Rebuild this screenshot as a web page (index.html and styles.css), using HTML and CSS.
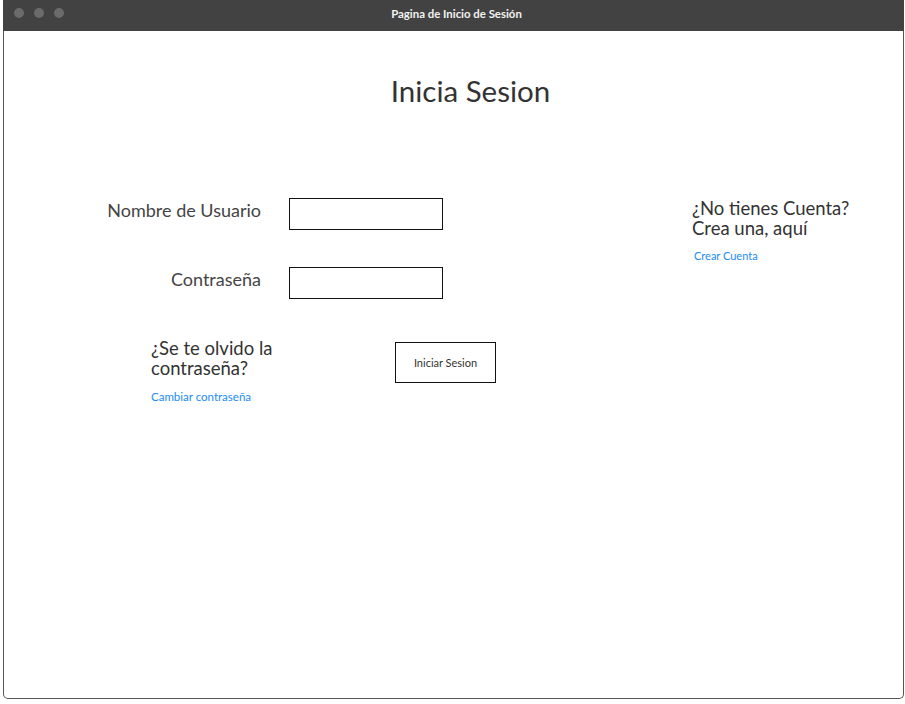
FILE: index.html
```html
<!DOCTYPE html>
<html lang="es">
<head>
<meta charset="utf-8">
<title>Pagina de Inicio de Sesión</title>
<link rel="stylesheet" href="styles.css">
</head>
<body>
<div class="window">
  <div class="titlebar">
    <div class="dots"><span class="dot"></span><span class="dot"></span><span class="dot"></span></div>
    <div class="title">Pagina de Inicio de Sesión</div>
  </div>
  <div class="content">
    <h1 class="heading">Inicia Sesion</h1>
    <div class="main">
      <div class="left">
        <div class="field">
          <label class="label">Nombre de Usuario</label>
          <div class="input"></div>
        </div>
        <div class="field field-2">
          <label class="label">Contraseña</label>
          <div class="input"></div>
        </div>
        <div class="bottom">
          <div class="forgot">
            <p class="question">¿Se te olvido la<br>contraseña?</p>
            <a class="link">Cambiar contraseña</a>
          </div>
          <div class="button">Iniciar Sesion</div>
        </div>
      </div>
      <div class="right">
        <p class="question">¿No tienes Cuenta?<br>Crea una, aquí</p>
        <a class="link link-right">Crear Cuenta</a>
      </div>
    </div>
  </div>
</div>
</body>
</html>
```

FILE: styles.css
```css
* { box-sizing: border-box; }
html, body { margin: 0; padding: 0; background: #fff; }
body { font-family: Lato, "Open Sans", sans-serif; color: #333; }

.window {
  margin-left: 3px;
  width: 901px;
  height: 699px;
  border: 1px solid #555;
  border-top: none;
  border-radius: 0 0 5px 5px;
  display: flex;
  flex-direction: column;
}
.titlebar {
  height: 31px;
  margin: 0 -1px;
  background: #424242;
  position: relative;
  display: flex;
  align-items: center;
  justify-content: center;
}
.dots {
  position: absolute;
  left: 11px;
  top: 8px;
  display: flex;
  gap: 10px;
}
.dot {
  width: 10px;
  height: 10px;
  border-radius: 50%;
  background: #6b6b6b;
}
.title {
  color: #f2f2f2;
  font-size: 11.4px;
  font-weight: bold;
  padding-left: 6px;
  padding-bottom: 4px;
}
.content { flex: 1; }
.heading {
  margin: 42px 0 0 34px;
  font-size: 29.5px;
  font-weight: normal;
  text-align: center;
  line-height: 36px;
  color: #333;
}
.main {
  display: flex;
  margin-top: 89px;
}
.left { width: 492px; }
.field {
  display: flex;
  align-items: center;
}
.field-2 { margin-top: 37px; }
.label {
  width: 257px;
  text-align: right;
  font-size: 18px;
  color: #444;
  margin-right: 28px;
  padding-bottom: 8px;
}
.input {
  width: 154px;
  height: 32px;
  border: 1px solid #111;
}
.bottom {
  display: flex;
  align-items: flex-start;
  margin-top: 39px;
  padding-left: 147px;
}
.forgot { width: 244px; }
.question {
  margin: 0;
  font-size: 18.5px;
  line-height: 20px;
  color: #333;
}
.link {
  display: block;
  margin-top: 12px;
  font-size: 11.5px;
  color: #1a8cf5;
}
.button {
  margin-top: 4px;
  width: 101px;
  height: 41px;
  border: 1px solid #111;
  display: flex;
  align-items: center;
  justify-content: center;
  font-size: 11px;
  color: #333;
}
.right {
  margin-left: 196px;
  padding-top: 0;
}
.link-right { margin-left: 2px; margin-top: 11px; font-size: 11px; }
```
